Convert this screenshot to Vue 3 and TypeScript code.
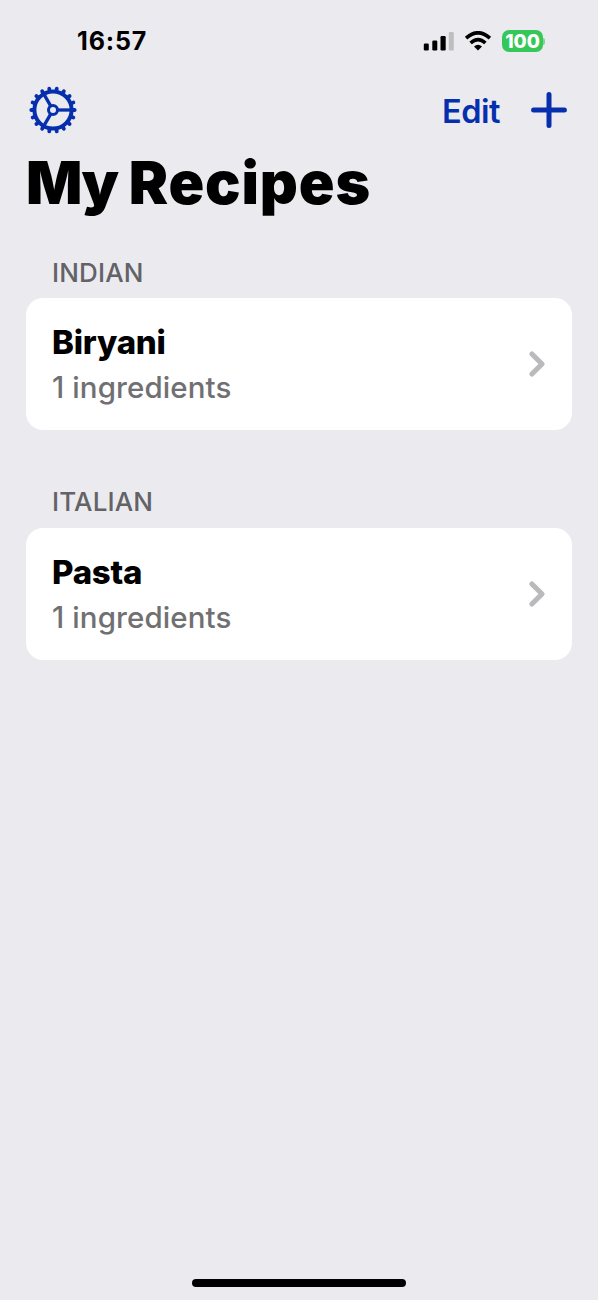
<script setup lang="ts">
interface Recipe {
  name: string
  ingredients: number
}
interface Section {
  title: string
  recipes: Recipe[]
}

const sections: Section[] = [
  { title: 'INDIAN', recipes: [{ name: 'Biryani', ingredients: 1 }] },
  { title: 'ITALIAN', recipes: [{ name: 'Pasta', ingredients: 1 }] },
]

const teeth: number[] = Array.from({ length: 18 }, (_, i) => i * 20)
const spokes: number[] = [0, 120, 240]
</script>

<template>
  <div class="screen">
    <header class="status">
      <span class="time">16:57</span>
      <div class="indicators">
        <svg class="signal" width="31" height="20" viewBox="0 0 31 20">
          <rect x="0.8" y="12.5" width="5" height="7" rx="1.3" />
          <rect x="9.3" y="9.5" width="5" height="10" rx="1.3" />
          <rect x="17.5" y="5" width="5.2" height="14.5" rx="1.3" />
          <rect x="25.8" y="1" width="5" height="18.5" rx="1.3" fill="#bebec1" />
        </svg>
        <svg class="wifi" width="28" height="20" viewBox="0 0 28 20">
          <path d="M2.1 7.2Q14-3.6 25.9 7.2" />
          <path d="M6.6 12Q14 5.2 21.4 12" />
          <path class="dot" d="M10 15.4Q14 12 18 15.4L14 19.4Z" />
        </svg>
        <div class="battery"><span>100</span></div>
        <i class="cap"></i>
      </div>
    </header>

    <nav class="toolbar">
      <svg class="gear" width="48" height="48" viewBox="-24 -24 48 48">
        <circle r="18.6" stroke-width="4" />
        <circle r="4.5" stroke-width="3" />
        <path v-for="a in teeth" :key="a" d="M19 0H21.7" stroke-width="3.8" :transform="`rotate(${a})`" />
        <path v-for="a in spokes" :key="'s' + a" class="spoke" d="M5 0H18" stroke-width="3.3" :transform="`rotate(${a})`" />
      </svg>
      <span class="edit">Edit</span>
      <svg class="plus" width="36" height="36" viewBox="0 0 36 36">
        <path d="M18 2.6V33.4M2.6 18H33.4" />
      </svg>
    </nav>

    <h1><span class="lead">My</span> Recipes</h1>

    <section v-for="s in sections" :key="s.title">
      <h2>{{ s.title }}</h2>
      <div v-for="r in s.recipes" :key="r.name" class="card">
        <div class="info">
          <span class="name">{{ r.name }}</span>
          <span class="count">{{ r.ingredients }} ingredients</span>
        </div>
        <svg class="chevron" width="18" height="28" viewBox="0 0 18 28">
          <path d="M3.9 4L14 14L3.9 24" />
        </svg>
      </div>
    </section>

    <div class="home"></div>
  </div>
</template>

<style>
body {
  background: #ebebef;
}
</style>

<style scoped>
.screen {
  box-sizing: border-box;
  width: 598px;
  height: 1300px;
  padding: 0 26px 13px;
  display: flex;
  flex-direction: column;
  background: #ebebef;
  color: #000;
  font-family: Inter, "Liberation Sans", sans-serif;
  overflow: hidden;
}
.status {
  height: 82px;
  display: flex;
  align-items: center;
  justify-content: space-between;
  padding: 0 27px 0 51px;
}
.time {
  font-size: 25px;
  font-weight: 700;
  line-height: 30px;
  letter-spacing: 0.85px;
}
.indicators {
  display: flex;
  align-items: center;
}
.wifi {
  margin-left: 10px;
}
.wifi path {
  fill: none;
  stroke: #000;
  stroke-width: 3.6;
}
.wifi .dot {
  fill: #000;
  stroke: none;
}
.battery {
  width: 41px;
  height: 22px;
  margin-left: 10px;
  border-radius: 7px;
  background: #35c759;
  color: #fff;
  display: flex;
  align-items: center;
  justify-content: center;
  font-size: 19px;
  font-weight: 800;
  letter-spacing: -0.1px;
}
.cap {
  width: 2px;
  height: 7px;
  border-radius: 0 2px 2px 0;
  background: #7fd795;
}
.toolbar {
  height: 56px;
  display: flex;
  align-items: center;
  padding: 0 5px 0 3px;
}
.gear,
.plus {
  fill: none;
  stroke: #062fae;
}
.gear path {
  stroke-linecap: round;
}
.gear .spoke {
  stroke-linecap: butt;
}
.edit {
  margin-left: auto;
  padding-top: 3px;
  color: #062fae;
  font-size: 32.5px;
  font-weight: 600;
  line-height: 40px;
  letter-spacing: -0.5px;
}
.plus {
  margin-left: 31px;
  stroke-width: 5;
  stroke-linecap: round;
}
h1 {
  margin: 9px 0 0;
  height: 71px;
  font-size: 59px;
  line-height: 72px;
  font-weight: 900;
  letter-spacing: 0.85px;
  word-spacing: -1px;
  white-space: nowrap;
}
.lead {
  letter-spacing: -1.8px;
}
section {
  height: 229.5px;
}
h2 {
  margin: 0;
  height: 80px;
  box-sizing: border-box;
  padding: 39px 26px 0;
  font-size: 26px;
  line-height: 32px;
  font-weight: 550;
  letter-spacing: 0.15px;
  color: #626267;
}
section + section h2 {
  padding-top: 38.5px;
}
.card {
  height: 132px;
  box-sizing: border-box;
  border-radius: 17px;
  background: #fff;
  padding: 0 26px;
  display: flex;
  align-items: center;
  justify-content: space-between;
}
.info {
  display: flex;
  flex-direction: column;
  gap: 4px;
  padding-top: 2px;
}
.name {
  font-size: 33px;
  line-height: 41px;
  font-weight: 800;
  letter-spacing: -0.25px;
}
.count {
  font-size: 29.5px;
  line-height: 41px;
  font-weight: 540;
  letter-spacing: 0.1px;
  color: #707072;
}
.chevron path {
  fill: none;
  stroke: #bababc;
  stroke-width: 5.2;
  stroke-linecap: round;
  stroke-linejoin: round;
}
.home {
  width: 214px;
  height: 8px;
  border-radius: 4px;
  margin: auto auto 0;
  background: #000;
}
</style>
